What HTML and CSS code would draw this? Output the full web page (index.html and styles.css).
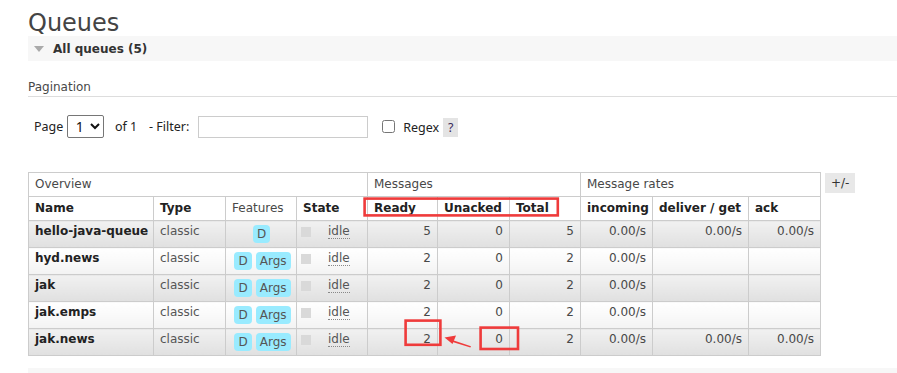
FILE: index.html
```html
<!DOCTYPE HTML>
<html>
<head>
<meta charset="utf-8">
<title>Queues</title>
<link rel="stylesheet" href="styles.css">
</head>

<body>
<div id="main">
	<h1>Queues</h1>
	<h2 class="toggle"><span class="arrow"></span>All queues (5)</h2>
	<h3 class="pagination-title">Pagination</h3>
	<div class="filter">
		<label class="lbl-page" for="page">Page</label>
		<select id="page" class="page-select"><option>1</option></select>
		<span class="lbl-of">of 1</span>
		<label class="lbl-filter" for="filter">- Filter:</label>
		<input type="text" id="filter" class="filter-text">
		<input type="checkbox" id="regex" class="regex-box">
		<label class="lbl-regex" for="regex">Regex</label>
		<span class="help">?</span>
	</div>
	<div class="table-wrap">
		<table class="list">
			<colgroup>
				<col style="width:125px"><col style="width:72px"><col style="width:71px"><col style="width:71px">
				<col style="width:70px"><col style="width:72px"><col style="width:71px">
				<col style="width:72px"><col style="width:96px"><col style="width:72px">
			</colgroup>
			<thead>
				<tr>
					<th colspan="4">Overview</th>
					<th colspan="3">Messages</th>
					<th colspan="3">Message rates</th>
				</tr>
				<tr>
					<th class="sort">Name</th>
					<th class="sort">Type</th>
					<th>Features</th>
					<th class="sort">State</th>
					<th class="sort">Ready</th>
					<th class="sort">Unacked</th>
					<th class="sort">Total</th>
					<th class="sort">incoming</th>
					<th class="sort">deliver / get</th>
					<th class="sort">ack</th>
				</tr>
			</thead>
			<tbody>
				<tr class="alt1">
					<td class="name">hello-java-queue</td>
					<td class="type">classic</td>
					<td class="features"><span class="badge">D</span></td>
					<td class="state"><span class="dot"></span><span class="idle">idle</span></td>
					<td class="num">5</td><td class="num">0</td><td class="num">5</td>
					<td class="num">0.00/s</td><td class="num">0.00/s</td><td class="num">0.00/s</td>
				</tr>
				<tr class="alt2">
					<td class="name">hyd.news</td>
					<td class="type">classic</td>
					<td class="features"><span class="badge">D</span><span class="badge">Args</span></td>
					<td class="state"><span class="dot"></span><span class="idle">idle</span></td>
					<td class="num">2</td><td class="num">0</td><td class="num">2</td>
					<td class="num">0.00/s</td><td class="num"></td><td class="num"></td>
				</tr>
				<tr class="alt1">
					<td class="name">jak</td>
					<td class="type">classic</td>
					<td class="features"><span class="badge">D</span><span class="badge">Args</span></td>
					<td class="state"><span class="dot"></span><span class="idle">idle</span></td>
					<td class="num">2</td><td class="num">0</td><td class="num">2</td>
					<td class="num">0.00/s</td><td class="num"></td><td class="num"></td>
				</tr>
				<tr class="alt2">
					<td class="name">jak.emps</td>
					<td class="type">classic</td>
					<td class="features"><span class="badge">D</span><span class="badge">Args</span></td>
					<td class="state"><span class="dot"></span><span class="idle">idle</span></td>
					<td class="num">2</td><td class="num">0</td><td class="num">2</td>
					<td class="num">0.00/s</td><td class="num"></td><td class="num"></td>
				</tr>
				<tr class="alt1">
					<td class="name">jak.news</td>
					<td class="type">classic</td>
					<td class="features"><span class="badge">D</span><span class="badge">Args</span></td>
					<td class="state"><span class="dot"></span><span class="idle">idle</span></td>
					<td class="num">2</td><td class="num">0</td><td class="num">2</td>
					<td class="num">0.00/s</td><td class="num">0.00/s</td><td class="num">0.00/s</td>
				</tr>
			</tbody>
		</table>
		<span class="columns-toggle">+/-</span>
	</div>
	<div class="section-footer"></div>
</div>

<!-- hand drawn marks over the screenshot -->
<svg class="marks" width="897" height="373" viewBox="0 0 897 373">
	<g fill="none" stroke="#ef3b3b" stroke-width="2.6">
		<rect x="364.6" y="198.6" width="193.2" height="16.8"/>
		<rect x="405.6" y="320.6" width="34.8" height="24.2"/>
		<rect x="480.6" y="327.6" width="37.4" height="21.4"/>
	</g>
	<polygon fill="#ef3b3b" points="450,339.2 471,346.2 470.4,347.6 449.4,341"/>
	<polygon fill="#ef3b3b" points="444.5,337.6 456,335.6 452.5,344"/>
</svg>
</body>
</html>
```

FILE: styles.css
```css
body{
	margin:0;
	font-family:"DejaVu Sans", Verdana, sans-serif;
	font-size:12px;
	color:#484848;
	background:#fff;
	position:relative;
}

#main{
	padding-left:28px;
}

h1{
	margin:0;
	padding-top:10px;
	font-size:24px;
	line-height:26px;
	font-weight:normal;
	color:#444;
}

.toggle{
	display:flex;
	align-items:center;
	margin:0;
	height:25px;
	background:#f7f7f7;
	font-size:12px;
	font-weight:bold;
	color:#333;
}
.arrow{
	width:0;
	height:0;
	border-left:5px solid transparent;
	border-right:5px solid transparent;
	border-top:6px solid #aaa;
	margin:1px 9px 0 6px;
}

.pagination-title{
	margin:18px 0 0;
	padding-bottom:1px;
	font-size:12px;
	font-weight:normal;
	line-height:16px;
	border-bottom:1px solid #ddd;
}

/* page / filter line */
.filter{
	display:flex;
	align-items:center;
	height:23px;
	margin-top:18px;
	padding-left:6px;
	font-family:"Noto Sans", "Open Sans", sans-serif;
	font-size:12.5px;
	color:#222;
}
.lbl-page{ width:32.7px; }
.page-select{
	width:37px;
	height:23px;
	margin:0;
	padding:0 0 0 4px;
	font-family:"Noto Sans", sans-serif;
	font-size:14px;
	color:#111;
	border:1px solid #767676;
	border-radius:2px;
	background:#fff;
}
.lbl-of{ width:34px; margin-left:11.3px; }
.lbl-filter{ width:49.3px; }
.filter-text{
	box-sizing:border-box;
	width:170px;
	height:22px;
	margin:0;
	border:1px solid #ccc;
}
.regex-box{
	width:13px;
	height:13px;
	margin:0 0 0 14px;
}
.lbl-regex{ width:40px; margin-left:8px; margin-top:2px; }
.help{
	width:15px;
	height:19px;
	line-height:20px;
	margin-top:2px;
	text-align:center;
	background:#e4e4e4;
	color:#3a2a5a;
}

/* queue table */
.table-wrap{
	display:flex;
	align-items:flex-start;
	margin-top:34px;
}
table.list{
	width:792px;
	table-layout:fixed;
	border-collapse:collapse;
}
table.list th, table.list td{
	border:1px solid #ccc;
	padding:4px 6px;
	text-align:left;
	vertical-align:top;
	white-space:nowrap;
}
table.list th{
	font-weight:normal;
	line-height:15px;
	background:#fff;
}
table.list th.sort{
	font-weight:bold;
	color:#222;
}
table.list td{
	line-height:12px;
}
tr.alt1 td{
	background:linear-gradient(#f1f1f1, #e0e0e0);
}
tr.alt2 td{
	background:linear-gradient(#fff, #f3f3f3);
}
td.name{
	font-weight:bold;
	color:#222;
}
td.type{
	color:#555;
}
td.num{
	text-align:right !important;
}
td.features{
	text-align:center !important;
	padding-left:7px !important;
	padding-right:4px !important;
}
td.features .badge:first-child{ margin-left:0; }
.badge{
	display:inline-block;
	vertical-align:top;
	height:18px;
	line-height:19px;
	padding:0 4px;
	margin-left:4px;
	border-radius:4px;
	background:#99ebff;
	color:#555;
}
td.features .badge:only-child{ margin-left:-2px; }
td.state{
	padding-left:4px !important;
}
.dot{
	display:inline-block;
	vertical-align:top;
	width:10px;
	height:10px;
	margin-top:2px;
	background:#d9d9d9;
}
.idle{
	display:inline-block;
	vertical-align:top;
	margin-left:17px;
	line-height:13px;
	border-bottom:1px dotted #888;
	color:#555;
}

.columns-toggle{
	margin:1px 0 0 4px;
	padding:0 6px;
	line-height:20px;
	background:#e8e8e8;
	color:#333;
}

.section-footer{
	margin-top:12px;
	height:20px;
	background:#f7f7f7;
}

.marks{
	position:absolute;
	top:0;
	left:0;
	pointer-events:none;
}
```
